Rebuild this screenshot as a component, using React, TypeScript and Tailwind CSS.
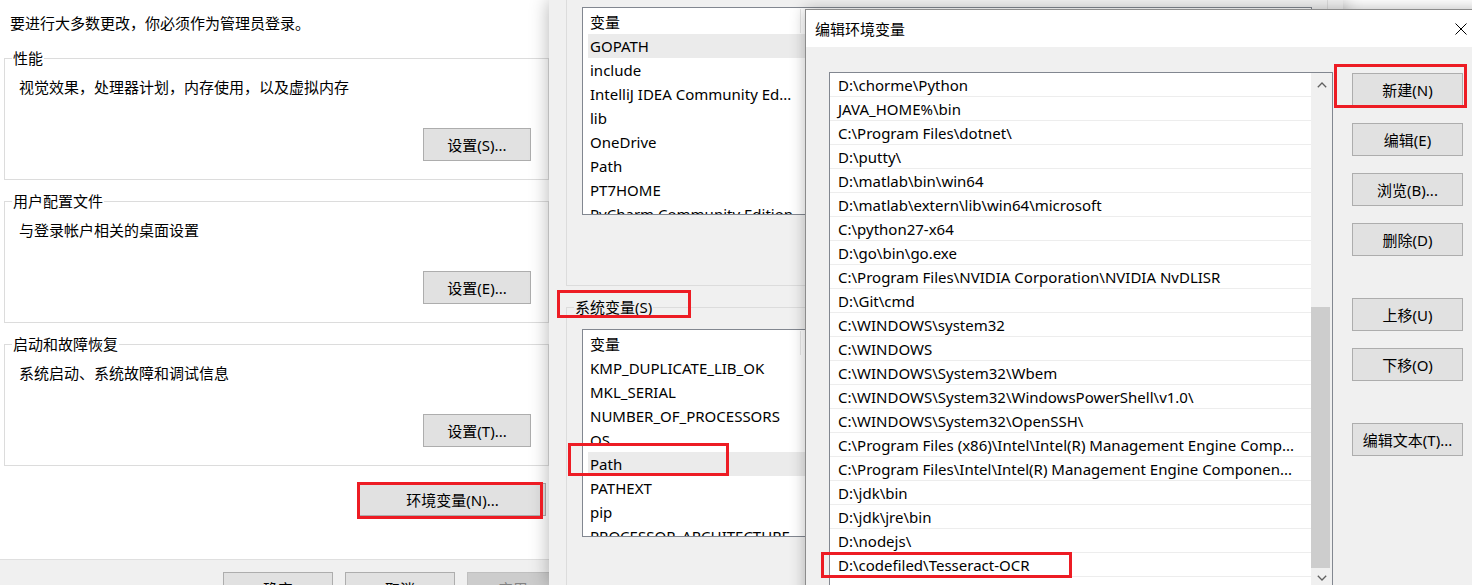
import React from "react";

const userVars = [
	"GOPATH",
	"include",
	"IntelliJ IDEA Community Ed...",
	"lib",
	"OneDrive",
	"Path",
	"PT7HOME",
	"PyCharm Community Edition",
];

const systemVars = [
	"KMP_DUPLICATE_LIB_OK",
	"MKL_SERIAL",
	"NUMBER_OF_PROCESSORS",
	"OS",
	"Path",
	"PATHEXT",
	"pip",
	"PROCESSOR_ARCHITECTURE",
];

const pathEntries = [
	"D:\\chorme\\Python",
	"JAVA_HOME%\\bin",
	"C:\\Program Files\\dotnet\\",
	"D:\\putty\\",
	"D:\\matlab\\bin\\win64",
	"D:\\matlab\\extern\\lib\\win64\\microsoft",
	"C:\\python27-x64",
	"D:\\go\\bin\\go.exe",
	"C:\\Program Files\\NVIDIA Corporation\\NVIDIA NvDLISR",
	"D:\\Git\\cmd",
	"C:\\WINDOWS\\system32",
	"C:\\WINDOWS",
	"C:\\WINDOWS\\System32\\Wbem",
	"C:\\WINDOWS\\System32\\WindowsPowerShell\\v1.0\\",
	"C:\\WINDOWS\\System32\\OpenSSH\\",
	"C:\\Program Files (x86)\\Intel\\Intel(R) Management Engine Comp...",
	"C:\\Program Files\\Intel\\Intel(R) Management Engine Componen...",
	"D:\\jdk\\bin",
	"D:\\jdk\\jre\\bin",
	"D:\\nodejs\\",
	"D:\\codefiled\\Tesseract-OCR",
	"",
];

const WinButton: React.FC<{ label: string; className?: string; disabled?: boolean }> = ({
	label,
	className = "",
	disabled,
}) => (
	<button
		className={`h-[33px] shrink-0 flex items-center justify-center border leading-[20px] ${
			disabled
				? "border-[#bfbfbf] bg-[#cccccc] text-[#838383]"
				: "border-[#adadad] bg-[#e1e1e1] text-black"
		} ${className}`}
	>
		{label}
	</button>
);

const Group: React.FC<{ title: string; desc: string; button: string }> = ({
	title,
	desc,
	button,
}) => (
	<fieldset className="border border-[#dcdcdc] pb-[18px]">
		<legend className="ml-[7px] px-[1px] leading-[20px]">{title}</legend>
		<div className="pl-[14px] pr-[17px]">
			<p className="pt-[9px] leading-[20px]">{desc}</p>
			<div className="mt-[31px] flex justify-end">
				<WinButton label={button} className="w-[108px]" />
			</div>
		</div>
	</fieldset>
);

const VarList: React.FC<{ rows: string[]; selected: number }> = ({ rows, selected }) => (
	<div className="h-[208px] border border-[#828790] bg-white overflow-hidden">
		<div className="h-[26px] flex items-stretch">
			<div className="w-[217px] pl-[7px] pt-[2px] flex items-center">变量</div>
			<div className="w-px my-[1px] bg-[#e5e5e5]" />
		</div>
		{rows.map((r, i) => (
			<div
				key={r}
				className={`h-[24px] pt-[1px] flex items-center whitespace-nowrap ${
					i === selected ? "ml-[5px] pl-[2px] bg-[#ebebeb]" : "pl-[7px]"
				}`}
			>
				{r}
			</div>
		))}
	</div>
);

const Chevron: React.FC<{ down?: boolean }> = ({ down }) => (
	<svg width="10" height="6" viewBox="0 0 10 6" className={down ? "rotate-180" : ""}>
		<polyline points="0.8,5.2 5,1 9.2,5.2" fill="none" stroke="#606060" strokeWidth="1.3" />
	</svg>
);

const RedBox: React.FC<{ className: string }> = ({ className }) => (
	<div className={`absolute border-[3px] border-[#ed1c24] pointer-events-none ${className}`} />
);

export default function App() {
	return (
		<div className="relative w-[1472px] h-[585px] overflow-hidden bg-white text-[15px] text-black font-['Noto_Sans','Noto_Sans_CJK_SC',sans-serif]">
			{/* system properties */}
			<section className="absolute left-0 top-0 w-[553px] h-[620px] bg-white flex flex-col">
				<p className="pl-[10px] pt-[13px] leading-[20px]">要进行大多数更改，你必须作为管理员登录。</p>
				<div className="mt-[15px] mx-[4px] flex flex-col gap-[11px]">
					<Group title="性能" desc="视觉效果，处理器计划，内存使用，以及虚拟内存" button="设置(S)..." />
					<Group title="用户配置文件" desc="与登录帐户相关的桌面设置" button="设置(E)..." />
					<Group title="启动和故障恢复" desc="系统启动、系统故障和调试信息" button="设置(T)..." />
				</div>
				<div className="mt-[17px] pl-[359px]">
					<WinButton label="环境变量(N)..." className="w-[187px]" />
				</div>
				<div className="mt-[43px] flex-1 border-t border-[#dfdfdf] bg-[#f0f0f0] pt-[12px] pl-[223px] flex gap-[12px]">
					<WinButton label="确定" className="w-[110px]" />
					<WinButton label="取消" className="w-[110px]" />
					<WinButton label="应用(A)" className="w-[110px]" disabled />
				</div>
			</section>

			{/* environment variables */}
			<section className="absolute left-[549px] top-0 w-[794px] h-[585px] bg-[#f0f0f0] shadow-[0_0_18px_rgba(0,0,0,0.3)] overflow-hidden">
				<div className="ml-[17px] mr-[15px] border-x border-b border-[#dcdcdc] px-[15px] pt-[7px] pb-[70px]">
					<VarList rows={userVars} selected={0} />
				</div>
				<fieldset className="mt-[11px] ml-[17px] mr-[15px] h-[320px] border border-[#dcdcdc]">
					<legend className="ml-[7px] px-[1px] leading-[20px]">系统变量(S)</legend>
					<div className="pt-[12px] px-[15px]">
						<VarList rows={systemVars} selected={4} />
					</div>
				</fieldset>
			</section>

			{/* edit environment variable */}
			<section className="absolute left-[805px] top-[9px] w-[680px] h-[600px] border border-[#8c8c8c] bg-[#f0f0f0] shadow-[0_0_14px_rgba(0,0,0,0.28)] flex flex-col">
				<header className="h-[37px] bg-white flex items-center">
					<h1 className="pl-[9px] leading-[20px]">编辑环境变量</h1>
					<div className="ml-auto w-[46px] h-full flex items-center justify-center">
						<svg width="12" height="12" viewBox="0 0 12 12">
							<path d="M0.5 0.5 L11.5 11.5 M11.5 0.5 L0.5 11.5" stroke="#000" strokeWidth="1" />
						</svg>
					</div>
				</header>
				<div className="flex">
					<div className="ml-[23px] mt-[25px] w-[504px] h-[517px] border border-[#828790] bg-white flex">
						<div className="flex-1 overflow-hidden">
							{pathEntries.map((p, i) => (
								<div
									key={i}
									className="h-[24px] pt-[2px] border-b border-[#ededed] pl-[8px] flex items-center whitespace-nowrap"
								>
									{p}
								</div>
							))}
						</div>
						<div className="w-[21px] bg-[#f0f0f0] flex flex-col">
							<div className="h-[24px] flex items-center justify-center">
								<Chevron />
							</div>
							<div className="mt-[210px] h-[261px] w-[19px] bg-[#cdcdcd]" />
							<div className="h-[20px] flex items-center justify-center">
								<Chevron down />
							</div>
						</div>
					</div>
					<div className="ml-[19px] mt-[26px] flex flex-col">
						<WinButton label="新建(N)" className="w-[111px]" />
						<WinButton label="编辑(E)" className="w-[111px] mt-[17px]" />
						<WinButton label="浏览(B)..." className="w-[111px] mt-[17px]" />
						<WinButton label="删除(D)" className="w-[111px] mt-[17px]" />
						<WinButton label="上移(U)" className="w-[111px] mt-[42px]" />
						<WinButton label="下移(O)" className="w-[111px] mt-[17px]" />
						<WinButton label="编辑文本(T)..." className="w-[111px] mt-[42px]" />
					</div>
				</div>
			</section>

			{/* annotations */}
			<RedBox className="left-[357px] top-[482px] w-[186px] h-[37px]" />
			<RedBox className="left-[557px] top-[290px] w-[134px] h-[28px]" />
			<RedBox className="left-[568px] top-[443px] w-[161px] h-[33px]" />
			<RedBox className="left-[1334px] top-[64px] w-[133px] h-[44px]" />
			<RedBox className="left-[821px] top-[552px] w-[251px] h-[26px]" />
		</div>
	);
}
